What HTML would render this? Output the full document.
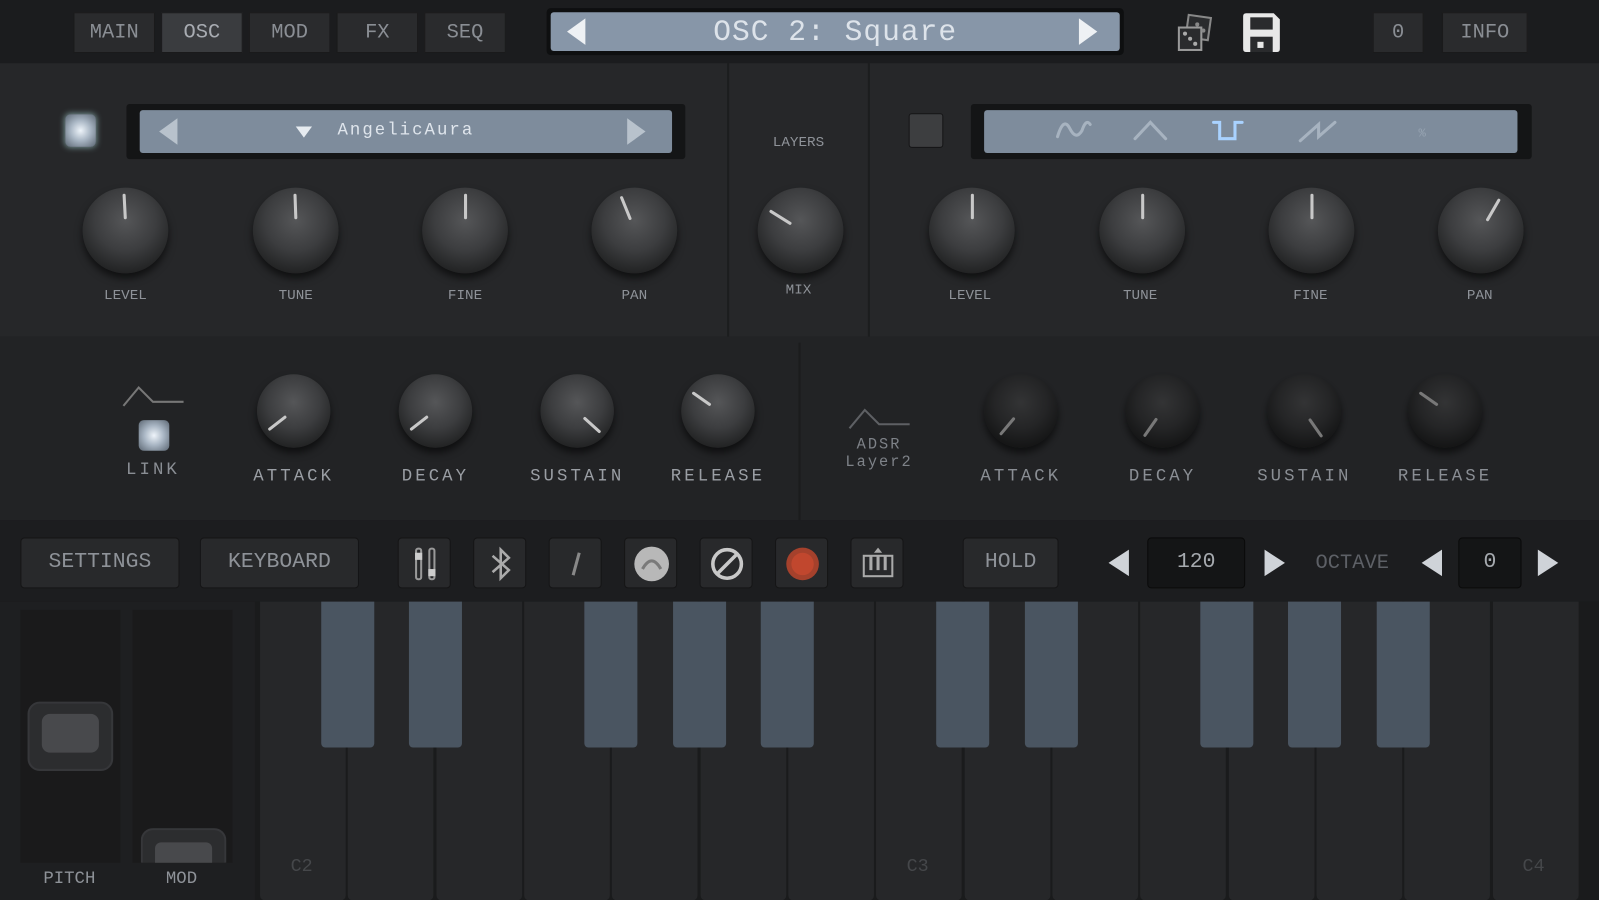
<!DOCTYPE html>
<html><head><meta charset="utf-8"><style>
*{margin:0;padding:0;box-sizing:border-box}
html,body{width:1599px;height:900px;overflow:hidden;background:#1d1e20}
#w{position:absolute;left:0;top:0;width:1568px;height:883px;transform:scale(1.0198);transform-origin:0 0;font-family:"Liberation Mono",monospace;color:#9a9ea4}
.a{position:absolute}
.tab{position:absolute;top:12px;height:40px;width:80px;background:#2a2b2d;border:1px solid #1a1a1b;color:#8a8e94;font-size:20px;text-align:center;line-height:40px}
.knob{position:absolute;border-radius:50%;background:radial-gradient(circle at 50% 38%,#555658 0%,#3c3d3f 45%,#28292a 70%,#111 100%);box-shadow:0 5px 8px rgba(0,0,0,.6)}
.knob i{position:absolute;left:0;top:0;width:100%;height:100%}
.knob i::after{content:"";position:absolute;left:calc(50% - 1.5px);top:7%;width:3px;height:30%;background:#c8c8c8;border-radius:2px}
.dim{filter:brightness(.6)}
.lbl{position:absolute;font-size:14px;color:#8e9298;text-align:center;width:120px;transform:translateX(-60px)}
.lb2{position:absolute;font-size:17px;letter-spacing:3px;color:#9a9ea4;text-align:center;width:140px;transform:translateX(-70px)}
.btn{position:absolute;top:527px;height:50px;background:#28292b;border:1px solid #151516;border-radius:4px;color:#8e9298;font-size:21px;text-align:center;line-height:48px}
.ib{position:absolute;top:527px;width:52px;height:50px;background:#28292b;border:1px solid #151516;border-radius:4px}
.wk{position:absolute;top:590px;height:293px;width:84px;background:#262729;border-radius:0 0 5px 5px}
.bk{position:absolute;top:590px;height:143px;width:52px;background:#4a5561;border-radius:0 0 4px 4px}
.tri{position:absolute;width:0;height:0;border-top:13px solid transparent;border-bottom:13px solid transparent}
</style></head><body><div id="w">
<div class="a" style="left:0;top:0;width:1568px;height:62px;background:#1b1c1e"></div>
<div class="tab" style="left:72px">MAIN</div>
<div class="tab" style="left:158px;background:#3a3c3f;color:#a8acb2">OSC</div>
<div class="tab" style="left:244px">MOD</div>
<div class="tab" style="left:330px">FX</div>
<div class="tab" style="left:416px">SEQ</div>
<div class="a" style="left:536px;top:8px;width:566px;height:46px;background:#0e0f10;border-radius:4px"></div>
<div class="a" style="left:540px;top:12px;width:558px;height:38px;background:#8796a8;border-radius:3px;color:#dde3ea;font-size:29px;text-align:center;line-height:40px;letter-spacing:1px">OSC 2: Square</div>
<div class="tri" style="left:556px;top:18px;border-right:18px solid #eef1f4"></div>
<div class="tri" style="left:1058px;top:18px;border-left:18px solid #eef1f4"></div>
<svg class="a" style="left:1152px;top:12px" width="42" height="42" viewBox="0 0 42 42"><rect x="12" y="4" width="22" height="22" fill="#2a2b2d" stroke="#888" stroke-width="2" transform="rotate(8 23 15)"/><rect x="4" y="15" width="22" height="22" fill="#2a2b2d" stroke="#999" stroke-width="2"/><circle cx="10" cy="21" r="2" fill="#aaa"/><circle cx="20" cy="31" r="2" fill="#aaa"/><circle cx="15" cy="26" r="2" fill="#aaa"/><circle cx="22" cy="12" r="2" fill="#888"/><circle cx="28" cy="18" r="2" fill="#888"/></svg>
<svg class="a" style="left:1216px;top:11px" width="42" height="42" viewBox="0 0 42 42"><path d="M3 5 Q3 2 6 2 H33 L39 8 V37 Q39 40 36 40 H6 Q3 40 3 37Z" fill="#e8e8e8"/><rect x="10" y="6" width="22" height="12" fill="#2a2b2d"/><rect x="10" y="25" width="22" height="15" fill="#2a2b2d"/><rect x="17" y="30" width="6" height="6" fill="#e8e8e8"/></svg>
<div class="tab" style="left:1346px;width:50px;top:12px">0</div>
<div class="tab" style="left:1414px;width:84px">INFO</div>
<div class="a" style="left:0;top:62px;width:1568px;height:268px;background:#262729"></div>
<div class="a" style="left:713px;top:62px;width:2px;height:268px;background:#1c1d1e"></div>
<div class="a" style="left:851px;top:62px;width:2px;height:268px;background:#1c1d1e"></div>
<div class="a" style="left:64px;top:112px;width:30px;height:32px;border-radius:5px;background:radial-gradient(circle,#eef4fa 0%,#a9b6c4 45%,#5b6672 100%);box-shadow:0 0 6px #8aa"></div>
<div class="a" style="left:124px;top:102px;width:548px;height:54px;background:#141516;border-radius:3px"></div>
<div class="a" style="left:137px;top:108px;width:522px;height:42px;background:#7e8c9c;border-radius:3px;color:#dfe5ec;font-size:17px;text-align:center;line-height:42px;letter-spacing:2px">AngelicAura</div>
<div class="tri" style="left:156px;top:116px;border-right:18px solid #b8c2cc"></div>
<div class="tri" style="left:615px;top:116px;border-left:18px solid #b8c2cc"></div>
<div class="a" style="left:290px;top:124px;border-left:8px solid transparent;border-right:8px solid transparent;border-top:11px solid #e6ebf0"></div>
<div class="lbl" style="left:783px;top:132px">LAYERS</div>
<div class="a" style="left:891px;top:111px;width:34px;height:34px;background:#3d3e40;border:1px solid #151516;border-radius:3px"></div>
<div class="a" style="left:952px;top:102px;width:550px;height:54px;background:#141516;border-radius:3px"></div>
<div class="a" style="left:965px;top:108px;width:523px;height:42px;background:#7e8c9c;border-radius:3px"></div>
<svg class="a" style="left:965px;top:108px" width="523" height="42"><g fill="none" stroke-width="3" stroke-linecap="round"><path d="M72 26 Q78 6 84 18 T96 20 Q100 8 104 14" stroke="#a7b3c0"/><path d="M148 28 L163 12 L178 28" stroke="#a7b3c0"/><path d="M225 12 H231 V28 H246 V12 H253" stroke="#a9d2ff"/><path d="M310 30 L328 14 V26 L344 12" stroke="#a7b3c0"/><text x="426" y="26" fill="#97a4b2" stroke="none" font-size="12" font-family="Liberation Mono">%</text></g></svg>
<div class="knob" style="left:81px;top:184px;width:84px;height:84px"><i style="transform:rotate(-3deg)"></i></div>
<div class="knob" style="left:248px;top:184px;width:84px;height:84px"><i style="transform:rotate(-2deg)"></i></div>
<div class="knob" style="left:414px;top:184px;width:84px;height:84px"><i style="transform:rotate(0deg)"></i></div>
<div class="knob" style="left:580px;top:184px;width:84px;height:84px"><i style="transform:rotate(-22deg)"></i></div>
<div class="knob" style="left:743px;top:184px;width:84px;height:84px"><i style="transform:rotate(-58deg)"></i></div>
<div class="knob" style="left:911px;top:184px;width:84px;height:84px"><i style="transform:rotate(0deg)"></i></div>
<div class="knob" style="left:1078px;top:184px;width:84px;height:84px"><i style="transform:rotate(0deg)"></i></div>
<div class="knob" style="left:1244px;top:184px;width:84px;height:84px"><i style="transform:rotate(0deg)"></i></div>
<div class="knob" style="left:1410px;top:184px;width:84px;height:84px"><i style="transform:rotate(30deg)"></i></div>
<div class="lbl" style="left:123px;top:282px">LEVEL</div>
<div class="lbl" style="left:290px;top:282px">TUNE</div>
<div class="lbl" style="left:456px;top:282px">FINE</div>
<div class="lbl" style="left:622px;top:282px">PAN</div>
<div class="lbl" style="left:783px;top:277px">MIX</div>
<div class="lbl" style="left:951px;top:282px">LEVEL</div>
<div class="lbl" style="left:1118px;top:282px">TUNE</div>
<div class="lbl" style="left:1285px;top:282px">FINE</div>
<div class="lbl" style="left:1451px;top:282px">PAN</div>
<div class="a" style="left:0;top:330px;width:1568px;height:180px;background:#222325"></div>
<div class="a" style="left:783px;top:336px;width:2px;height:174px;background:#1b1c1d"></div>
<svg class="a" style="left:118px;top:376px" width="66" height="26"><path d="M3 22 L18 4 L32 18 H62" fill="none" stroke="#777" stroke-width="2"/></svg>
<div class="a" style="left:136px;top:412px;width:30px;height:30px;border-radius:5px;background:radial-gradient(circle,#eef4fa 0%,#a9b6c4 45%,#5b6672 100%)"></div>
<div class="lb2" style="left:150px;top:452px;color:#8a8e94">LINK</div>
<div class="knob" style="left:252px;top:367px;width:72px;height:72px"><i style="transform:rotate(-128deg)"></i></div>
<div class="knob" style="left:391px;top:367px;width:72px;height:72px"><i style="transform:rotate(-128deg)"></i></div>
<div class="knob" style="left:530px;top:367px;width:72px;height:72px"><i style="transform:rotate(132deg)"></i></div>
<div class="knob" style="left:668px;top:367px;width:72px;height:72px"><i style="transform:rotate(-55deg)"></i></div>
<div class="lb2" style="left:288px;top:458px">ATTACK</div>
<div class="lb2" style="left:427px;top:458px">DECAY</div>
<div class="lb2" style="left:566px;top:458px">SUSTAIN</div>
<div class="lb2" style="left:704px;top:458px">RELEASE</div>
<svg class="a" style="left:830px;top:398px" width="66" height="26"><path d="M3 22 L18 4 L32 18 H62" fill="none" stroke="#5e6064" stroke-width="2"/></svg>
<div class="a" style="left:802px;top:428px;width:120px;text-align:center;font-size:15px;line-height:17px;letter-spacing:2px;color:#7e8288">ADSR<br>Layer2</div>
<div class="knob dim" style="left:965px;top:367px;width:72px;height:72px"><i style="transform:rotate(-140deg)"></i></div>
<div class="knob dim" style="left:1104px;top:367px;width:72px;height:72px"><i style="transform:rotate(-145deg)"></i></div>
<div class="knob dim" style="left:1243px;top:367px;width:72px;height:72px"><i style="transform:rotate(145deg)"></i></div>
<div class="knob dim" style="left:1381px;top:367px;width:72px;height:72px"><i style="transform:rotate(-55deg)"></i></div>
<div class="lb2" style="left:1001px;top:458px;color:#8a8e94">ATTACK</div>
<div class="lb2" style="left:1140px;top:458px;color:#8a8e94">DECAY</div>
<div class="lb2" style="left:1279px;top:458px;color:#8a8e94">SUSTAIN</div>
<div class="lb2" style="left:1417px;top:458px;color:#8a8e94">RELEASE</div>
<div class="a" style="left:0;top:510px;width:1568px;height:80px;background:#1c1d1f"></div>
<div class="btn" style="left:20px;width:156px">SETTINGS</div>
<div class="btn" style="left:196px;width:156px">KEYBOARD</div>
<div class="ib" style="left:390px"><svg width="52" height="50"><rect x="17" y="10" width="5" height="30" rx="2" fill="none" stroke="#999" stroke-width="2"/><rect x="30" y="10" width="5" height="30" rx="2" fill="none" stroke="#999" stroke-width="2"/><rect x="16" y="14" width="7" height="7" fill="#ccc"/><rect x="29" y="30" width="7" height="7" fill="#ccc"/></svg></div>
<div class="ib" style="left:464px"><svg width="52" height="50"><path d="M18 17 L34 31 L26 39 V11 L34 19 L18 33" fill="none" stroke="#aaa" stroke-width="2.5"/></svg></div>
<div class="ib" style="left:538px"><svg width="52" height="50"><path d="M29 14 L23 36" stroke="#888" stroke-width="3"/></svg></div>
<div class="ib" style="left:612px"><svg width="52" height="50"><circle cx="26" cy="25" r="17" fill="#b8b8b8"/><path d="M17 30 Q26 14 35 30" fill="none" stroke="#7a7a7a" stroke-width="3"/></svg></div>
<div class="ib" style="left:686px"><svg width="52" height="50"><circle cx="26" cy="25" r="14" fill="none" stroke="#c8c8c8" stroke-width="3.5"/><path d="M16 35 L36 15" stroke="#c8c8c8" stroke-width="3.5"/></svg></div>
<div class="ib" style="left:760px"><svg width="52" height="50"><circle cx="26" cy="25" r="16" fill="#a5412c"/><circle cx="26" cy="25" r="11" fill="#c1472e"/></svg></div>
<div class="ib" style="left:834px"><svg width="52" height="50"><rect x="12" y="17" width="28" height="20" fill="none" stroke="#aaa" stroke-width="2"/><path d="M19 17V31M26 17V31M33 17V31" stroke="#aaa" stroke-width="3"/><path d="M22 14 L26 9 L30 14" fill="#aaa"/></svg></div>
<div class="btn" style="left:944px;width:94px">HOLD</div>
<div class="tri" style="left:1087px;top:539px;border-right:20px solid #cfd3d8"></div>
<div class="btn" style="left:1125px;width:96px;background:#141516;border-color:#0a0a0a;color:#a6aaaf">120</div>
<div class="tri" style="left:1240px;top:539px;border-left:20px solid #cfd3d8"></div>
<div class="a" style="left:1290px;top:541px;font-size:20px;color:#5d6066">OCTAVE</div>
<div class="tri" style="left:1394px;top:539px;border-right:20px solid #cfd3d8"></div>
<div class="btn" style="left:1430px;width:62px;background:#141516;border-color:#0a0a0a;color:#a6aaaf">0</div>
<div class="tri" style="left:1508px;top:539px;border-left:20px solid #cfd3d8"></div>
<div class="a" style="left:0;top:590px;width:1568px;height:293px;background:#1a1b1c"></div>
<div class="a" style="left:0;top:590px;width:250px;height:293px;background:#1e1f21"></div>
<div class="a" style="left:20px;top:598px;width:98px;height:248px;background:#1a1a1b"></div>
<div class="a" style="left:130px;top:598px;width:98px;height:248px;background:#1a1a1b"></div>
<div class="a" style="left:27px;top:688px;width:84px;height:68px;border-radius:12px;background:#2c2d2f;border:2px solid #36373a"></div>
<div class="a" style="left:41px;top:700px;width:56px;height:38px;border-radius:8px;background:#48494c"></div>
<div class="a" style="left:138px;top:812px;width:84px;height:34px;border-radius:12px 12px 0 0;background:#2c2d2f;border:2px solid #36373a;border-bottom:none"></div>
<div class="a" style="left:152px;top:826px;width:56px;height:20px;border-radius:6px 6px 0 0;background:#48494c"></div>
<div class="lbl" style="left:68px;top:853px;font-size:17px">PITCH</div>
<div class="lbl" style="left:178px;top:853px;font-size:17px">MOD</div>
<div class="wk" style="left:255px"></div><div class="wk" style="left:341px"></div><div class="wk" style="left:428px"></div><div class="wk" style="left:514px"></div><div class="wk" style="left:600px"></div><div class="wk" style="left:687px"></div><div class="wk" style="left:773px"></div><div class="wk" style="left:859px"></div><div class="wk" style="left:946px"></div><div class="wk" style="left:1032px"></div><div class="wk" style="left:1118px"></div><div class="wk" style="left:1205px"></div><div class="wk" style="left:1291px"></div><div class="wk" style="left:1377px"></div><div class="wk" style="left:1464px"></div>
<div class="bk" style="left:315px"></div><div class="bk" style="left:401px"></div><div class="bk" style="left:573px"></div><div class="bk" style="left:660px"></div><div class="bk" style="left:746px"></div><div class="bk" style="left:918px"></div><div class="bk" style="left:1005px"></div><div class="bk" style="left:1177px"></div><div class="bk" style="left:1263px"></div><div class="bk" style="left:1350px"></div>
<div class="a" style="left:285px;top:840px;font-size:18px;color:#45474a">C2</div>
<div class="a" style="left:889px;top:840px;font-size:18px;color:#45474a">C3</div>
<div class="a" style="left:1493px;top:840px;font-size:18px;color:#45474a">C4</div>
</div></body></html>
